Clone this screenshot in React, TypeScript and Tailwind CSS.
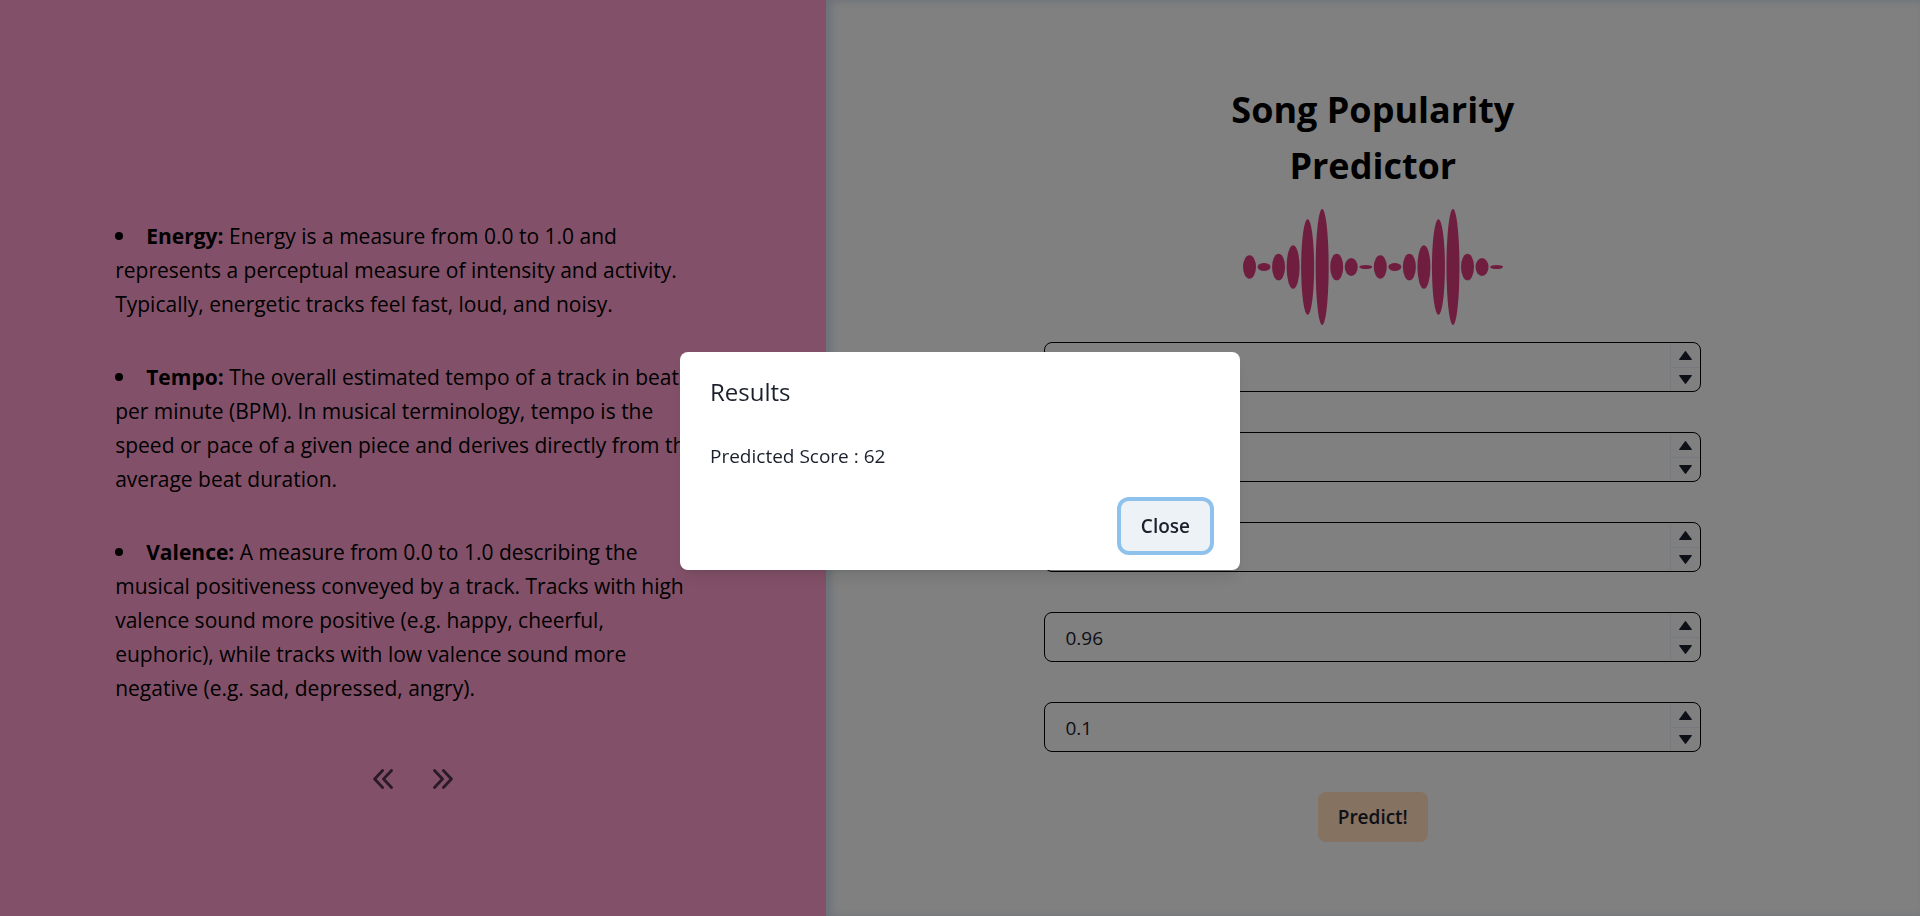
import { useState } from "react";

const heights = [70, 24, 80, 131, 288, 348, 80, 54, 12];

const terms = [
  {
    name: "Energy",
    text: "Energy is a measure from 0.0 to 1.0 and represents a perceptual measure of intensity and activity. Typically, energetic tracks feel fast, loud, and noisy.",
  },
  {
    name: "Tempo",
    text: "The overall estimated tempo of a track in beats per minute (BPM). In musical terminology, tempo is the speed or pace of a given piece and derives directly from the average beat duration.",
  },
  {
    name: "Valence",
    text: "A measure from 0.0 to 1.0 describing the musical positiveness conveyed by a track. Tracks with high valence sound more positive (e.g. happy, cheerful, euphoric), while tracks with low valence sound more negative (e.g. sad, depressed, angry).",
  },
];

const fields = [
  { name: "Danceability", value: "" },
  { name: "Loudness", value: "" },
  { name: "Energy", value: "" },
  { name: "Tempo", value: "0.96" },
  { name: "Valence", value: "0.1" },
];

function Wave() {
  return (
    <svg viewBox="0 0 780 348" className="h-[116px] w-[260px] fill-[#d73a7b]" aria-hidden="true">
      {[...heights, ...heights].map((h, i) => (
        <ellipse key={i} cx={19.5 + i * 43.6} cy={174} rx={19.5} ry={h / 2} />
      ))}
    </svg>
  );
}

function Chevrons({ flip = false }: { flip?: boolean }) {
  return (
    <svg
      viewBox="0 0 20 20"
      className={flip ? "size-5 -scale-x-100" : "size-5"}
      fill="none"
      stroke="currentColor"
      strokeWidth={2.8}
      strokeLinecap="round"
      strokeLinejoin="round"
      aria-hidden="true"
    >
      <path d="M9.6 1.5 1.6 10l8 8.5M18.5 1.5l-8 8.5 8 8.5" />
    </svg>
  );
}

function NumberField({ name, value }: { name: string; value: string }) {
  const [current, setCurrent] = useState(value);
  const step = (by: number) => setCurrent(String(Number((Number(current) + by).toFixed(2))));
  return (
    <div className="flex h-[50px] w-full rounded-lg border border-black">
      <input
        aria-label={name}
        inputMode="decimal"
        value={current}
        onChange={(e) => setCurrent(e.target.value)}
        className="min-w-0 flex-1 bg-transparent px-5 pt-0.5 text-[19px] text-[#1a202c] outline-none"
      />
      <div className="mt-px flex w-[30px] flex-col border-l border-[#e2e8f0] text-[#1a202c]">
        <button
          type="button"
          aria-label={`Increase ${name}`}
          onClick={() => step(0.01)}
          className="flex flex-1 items-center justify-center"
        >
          <svg viewBox="0 0 13 9" className="h-[9px] w-[13px] fill-current">
            <path d="M5.9.4a.8.8 0 0 1 1.2 0l5.6 7.5a.7.7 0 0 1-.5 1.1H.8a.7.7 0 0 1-.5-1.1z" />
          </svg>
        </button>
        <button
          type="button"
          aria-label={`Decrease ${name}`}
          onClick={() => step(-0.01)}
          className="flex flex-1 items-center justify-center border-t border-[#e2e8f0]"
        >
          <svg viewBox="0 0 13 9" className="h-[9px] w-[13px] fill-current">
            <path d="M5.9 8.6a.8.8 0 0 0 1.2 0l5.6-7.5A.7.7 0 0 0 12.2 0H.8a.7.7 0 0 0-.5 1.1z" />
          </svg>
        </button>
      </div>
    </div>
  );
}

export default function App() {
  const [open, setOpen] = useState(true);
  return (
    <div className="font-['Open_Sans','Noto_Sans',sans-serif]">
      <main className="flex min-h-screen">
        <section className="flex w-[43%] flex-col items-center bg-[#fa9bc9] px-[6%] pt-[219px] text-black">
          <ul className="flex max-w-[584px] flex-col gap-[39px] self-start text-[21px] leading-[34px]">
            {terms.map((t) => (
              <li key={t.name}>
                <span className="mr-[23px] mb-1 inline-block size-2 rounded-full bg-black align-middle" />
                <b>{t.name}:</b> {t.text}
              </li>
            ))}
          </ul>
          <nav className="mt-[49px] flex gap-[10px] text-[#52304a]">
            <button type="button" aria-label="Previous" className="flex size-[50px] items-center justify-center">
              <Chevrons />
            </button>
            <button type="button" aria-label="Next" className="flex size-[50px] items-center justify-center">
              <Chevrons flip />
            </button>
          </nav>
        </section>
        <section className="flex flex-1 flex-col items-center bg-[#f5f5f5] pt-[82px] shadow-[inset_5px_1px_8px_#ccd8e4]">
          <h1 className="w-[328px] text-center text-[36px] leading-[56px] font-bold text-black">
            Song Popularity Predictor
          </h1>
          <div className="mt-[15px] mb-[17px]">
            <Wave />
          </div>
          <form className="flex w-3/5 flex-col items-center gap-10" onSubmit={(e) => e.preventDefault()}>
            {fields.map((f) => (
              <NumberField key={f.name} name={f.name} value={f.value} />
            ))}
            <button
              type="submit"
              onClick={() => setOpen(true)}
              className="h-[50px] rounded-lg bg-[#ffdab9] px-5 text-[19px] font-semibold text-[#1a202c]"
            >
              Predict!
            </button>
          </form>
        </section>
      </main>
      {open && (
        <div className="fixed inset-0 flex items-center justify-center bg-black/48 pt-[6px]">
          <div
            role="alertdialog"
            aria-modal="true"
            aria-labelledby="results-title"
            className="w-[560px] rounded-lg bg-white pt-px text-[#1a202c] shadow-lg"
          >
            <h2 id="results-title" className="px-[30px] py-5 text-[24px] leading-[38px] font-medium">
              Results
            </h2>
            <p className="px-[30px] py-[10px] text-[19px] leading-[30px]">Predicted Score : 62</p>
            <div className="flex justify-end px-[30px] pt-5 pb-[19px]">
              <button
                type="button"
                onClick={() => setOpen(false)}
                className="h-[50px] rounded-lg bg-[#edf2f7] px-5 text-[19px] font-semibold shadow-[0_0_0_4px_rgba(66,153,225,0.6)]"
              >
                Close
              </button>
            </div>
          </div>
        </div>
      )}
    </div>
  );
}
